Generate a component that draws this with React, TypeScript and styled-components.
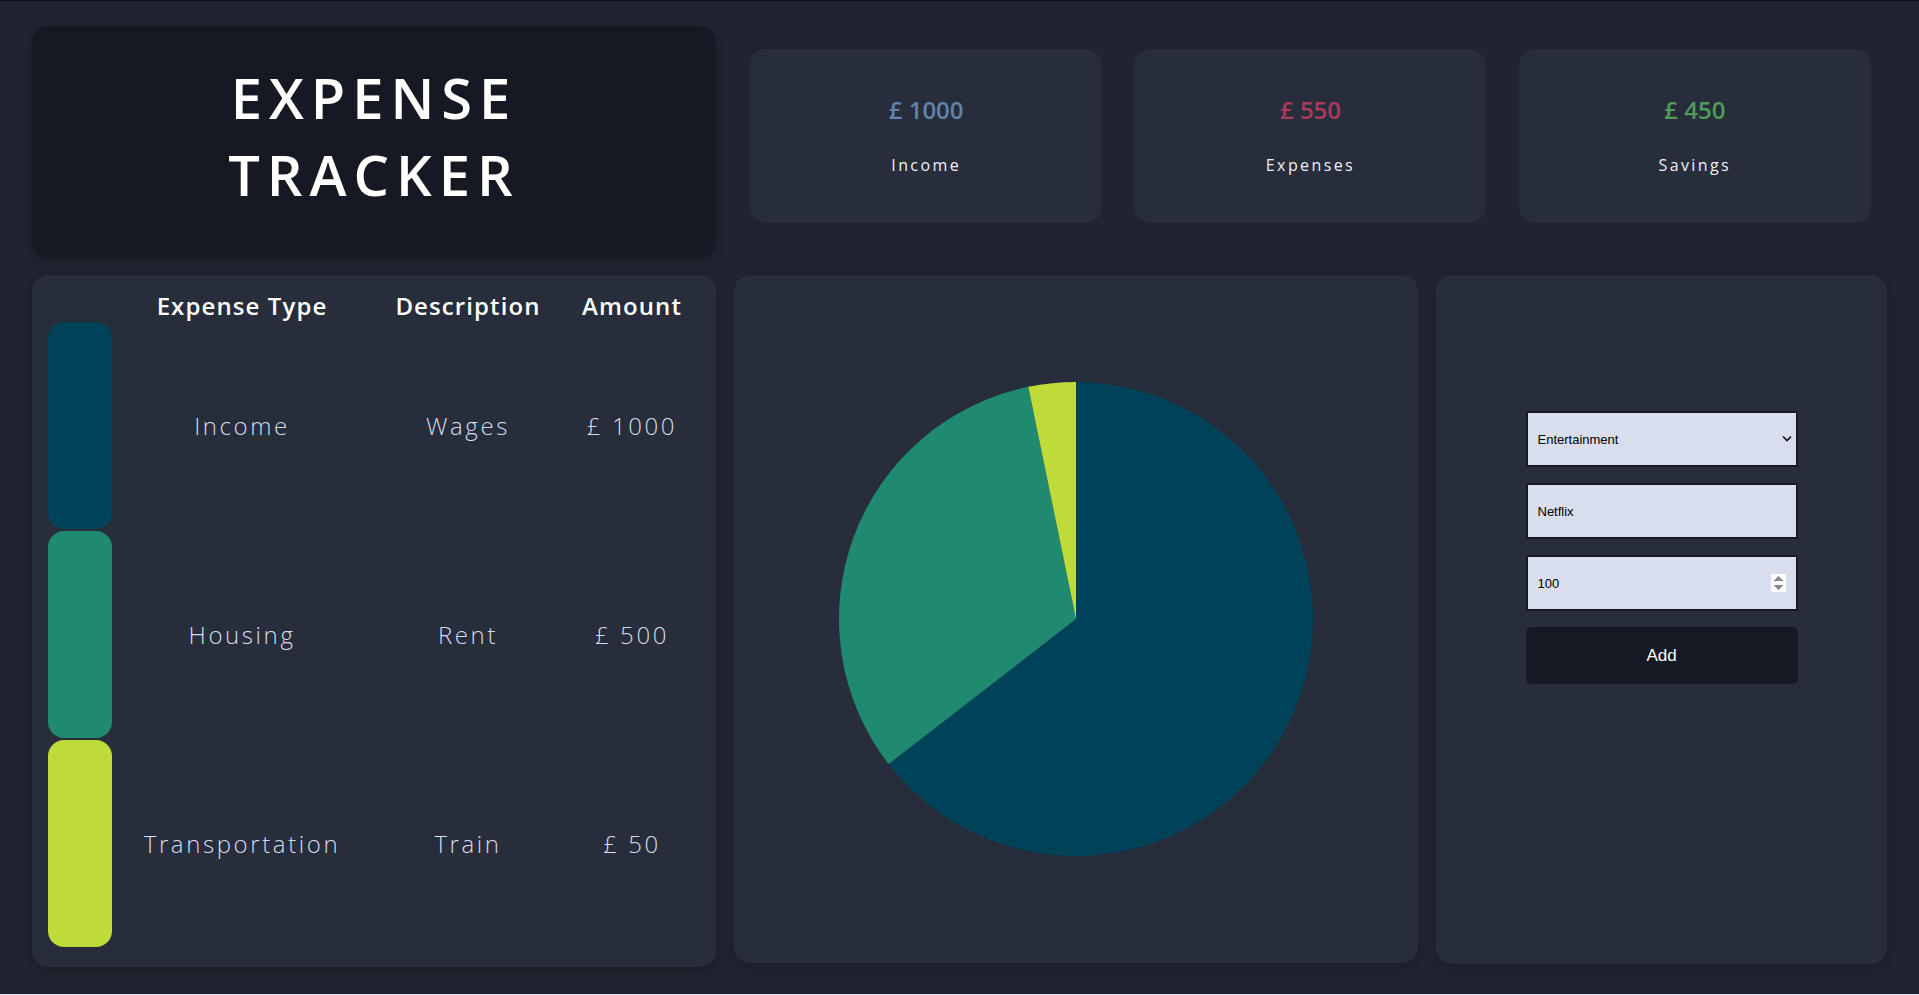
import React from "react";
import styled, { createGlobalStyle } from "styled-components";

const FONT = `"Open Sans", "Noto Sans", "DejaVu Sans", sans-serif`;

const GlobalStyle = createGlobalStyle`
  * { box-sizing: border-box; }
  html, body { margin: 0; padding: 0; }
  body {
    background: #dfe3ee;
    font-family: ${FONT};
  }
`;

const Page = styled.div`
  height: 994px;
  border-top: 1px solid #0e1015;
  background: #1f2430;
  padding: 25px 32px 0;
  display: grid;
  grid-template-columns: 684px 684px 451px;
  grid-template-rows: 232px 692px;
  column-gap: 18px;
  row-gap: 17px;
  align-items: start;
`;

const TitleCard = styled.div`
  height: 232px;
  background: #161923;
  border-radius: 16px;
  display: flex;
  align-items: center;
  justify-content: center;
  padding-bottom: 13px;
  box-shadow: 0 4px 10px rgba(0, 0, 0, 0.15);
`;

const Title = styled.h1`
  margin: 0;
  color: #ffffff;
  font-family: ${FONT};
  font-weight: 600;
  font-size: 56px;
  line-height: 77px;
  letter-spacing: 7px;
  text-align: center;
`;

const Stats = styled.div`
  grid-column: 2 / 4;
  display: flex;
  justify-content: space-around;
  align-items: flex-start;
  padding-top: 23px;
`;

const StatCard = styled.div`
  width: 352px;
  height: 174px;
  background: #272d3b;
  border-radius: 16px;
  display: flex;
  flex-direction: column;
  align-items: center;
  justify-content: center;
  gap: 29px;
  padding-bottom: 2px;
`;

const StatAmount = styled.div<{ $color: string }>`
  color: ${(p) => p.$color};
  font-size: 24px;
  font-weight: 600;
  line-height: 30px;
`;

const StatLabel = styled.div`
  color: #eef0f6;
  font-size: 16px;
  font-weight: 400;
  line-height: 22px;
  letter-spacing: 2.4px;
`;

const Card = styled.div<{ $height: number }>`
  height: ${(p) => p.$height}px;
  background: #272d3b;
  border-radius: 16px;
  box-shadow: 0 4px 10px rgba(0, 0, 0, 0.18);
`;

const TableCard = styled(Card)`
  padding: 16px 16px 19px;
  display: flex;
  flex-direction: column;
`;

const COLS = "64px 260px 192px 136px";

const HeaderRow = styled.div`
  display: grid;
  grid-template-columns: ${COLS};
  height: 30px;
  align-items: center;
`;

const HeaderCell = styled.div`
  text-align: center;
  color: #ffffff;
  font-size: 24px;
  font-weight: 600;
  line-height: 30px;
  letter-spacing: 1.1px;
`;

const Row = styled.div`
  display: grid;
  grid-template-columns: ${COLS};
  height: 209px;
  align-items: center;
`;

const ColorBar = styled.div<{ $color: string }>`
  height: 207px;
  border-radius: 16px;
  background: ${(p) => p.$color};
`;

const Cell = styled.div`
  text-align: center;
  color: #d5dbee;
  font-size: 24px;
  font-weight: 300;
  line-height: 30px;
  letter-spacing: 2.6px;
`;

const ChartCard = styled(Card)`
  display: flex;
  align-items: center;
  justify-content: center;
`;

const FormCard = styled(Card)`
  display: flex;
  justify-content: center;
  padding-top: 136px;
`;

const Form = styled.form`
  width: 272px;
  display: flex;
  flex-direction: column;
  gap: 16px;
`;

const SelectWrap = styled.div`
  position: relative;
`;

const fieldBase = `
  width: 100%;
  height: 56px;
  border: 2px solid #161922;
  border-radius: 0;
  background: #d8deee;
  color: #000000;
  font-family: "Liberation Sans", Arial, sans-serif;
  font-size: 13px;
  padding: 0 10px;
  outline: none;
`;

const Select = styled.select`
  ${fieldBase}
  appearance: none;
  -webkit-appearance: none;
`;

const Chevron = styled.svg`
  position: absolute;
  right: 6px;
  top: 24px;
  pointer-events: none;
`;

const Input = styled.input`
  ${fieldBase}
  &::-webkit-inner-spin-button {
    opacity: 1;
    height: 18px;
  }
`;

const AddButton = styled.button`
  height: 57px;
  border: none;
  border-radius: 5px;
  background: #161923;
  color: #ffffff;
  font-family: "Liberation Sans", Arial, sans-serif;
  font-size: 17px;
  cursor: pointer;
`;

type Entry = { type: string; description: string; amount: number; color: string };

const entries: Entry[] = [
  { type: "Income", description: "Wages", amount: 1000, color: "#004358" },
  { type: "Housing", description: "Rent", amount: 500, color: "#1F8A70" },
  { type: "Transportation", description: "Train", amount: 50, color: "#BEDB39" },
];

function Pie({ data, size }: { data: Entry[]; size: number }) {
  const r = size / 2;
  const total = data.reduce((s, d) => s + d.amount, 0);
  let start = 0;
  const pt = (a: number) => {
    const rad = (a * Math.PI) / 180;
    return [r + r * Math.sin(rad), r - r * Math.cos(rad)];
  };
  return (
    <svg width={size} height={size} viewBox={`0 0 ${size} ${size}`}>
      {data.map((d) => {
        const sweep = (d.amount / total) * 360;
        const end = start + sweep;
        const [x1, y1] = pt(start);
        const [x2, y2] = pt(end);
        const large = sweep > 180 ? 1 : 0;
        const path = `M${r},${r} L${x1},${y1} A${r},${r} 0 ${large} 1 ${x2},${y2} Z`;
        start = end;
        return <path key={d.type} d={path} fill={d.color} />;
      })}
    </svg>
  );
}

export default function App() {
  return (
    <>
      <GlobalStyle />
      <Page>
        <TitleCard>
          <Title>
            EXPENSE
            <br />
            TRACKER
          </Title>
        </TitleCard>
        <Stats>
          <StatCard>
            <StatAmount $color="#6184ab">£ 1000</StatAmount>
            <StatLabel>Income</StatLabel>
          </StatCard>
          <StatCard>
            <StatAmount $color="#a93a5b">£ 550</StatAmount>
            <StatLabel>Expenses</StatLabel>
          </StatCard>
          <StatCard>
            <StatAmount $color="#4f9b5a">£ 450</StatAmount>
            <StatLabel>Savings</StatLabel>
          </StatCard>
        </Stats>

        <TableCard $height={692}>
          <HeaderRow>
            <div />
            <HeaderCell>Expense Type</HeaderCell>
            <HeaderCell>Description</HeaderCell>
            <HeaderCell>Amount</HeaderCell>
          </HeaderRow>
          {entries.map((e) => (
            <Row key={e.type}>
              <ColorBar $color={e.color} />
              <Cell>{e.type}</Cell>
              <Cell>{e.description}</Cell>
              <Cell>£ {e.amount}</Cell>
            </Row>
          ))}
        </TableCard>

        <ChartCard $height={688}>
          <Pie data={entries} size={474} />
        </ChartCard>

        <FormCard $height={689}>
          <Form onSubmit={(ev) => ev.preventDefault()}>
            <SelectWrap>
              <Select defaultValue="Entertainment">
                <option>Entertainment</option>
                <option>Housing</option>
                <option>Transportation</option>
                <option>Income</option>
              </Select>
              <Chevron width="10" height="7" viewBox="0 0 10 7">
                <path d="M1 1.5 L5 5.5 L9 1.5" fill="none" stroke="#111" strokeWidth="1.6" />
              </Chevron>
            </SelectWrap>
            <Input type="text" defaultValue="Netflix" />
            <Input type="number" defaultValue={100} />
            <AddButton type="submit">Add</AddButton>
          </Form>
        </FormCard>
      </Page>
    </>
  );
}
